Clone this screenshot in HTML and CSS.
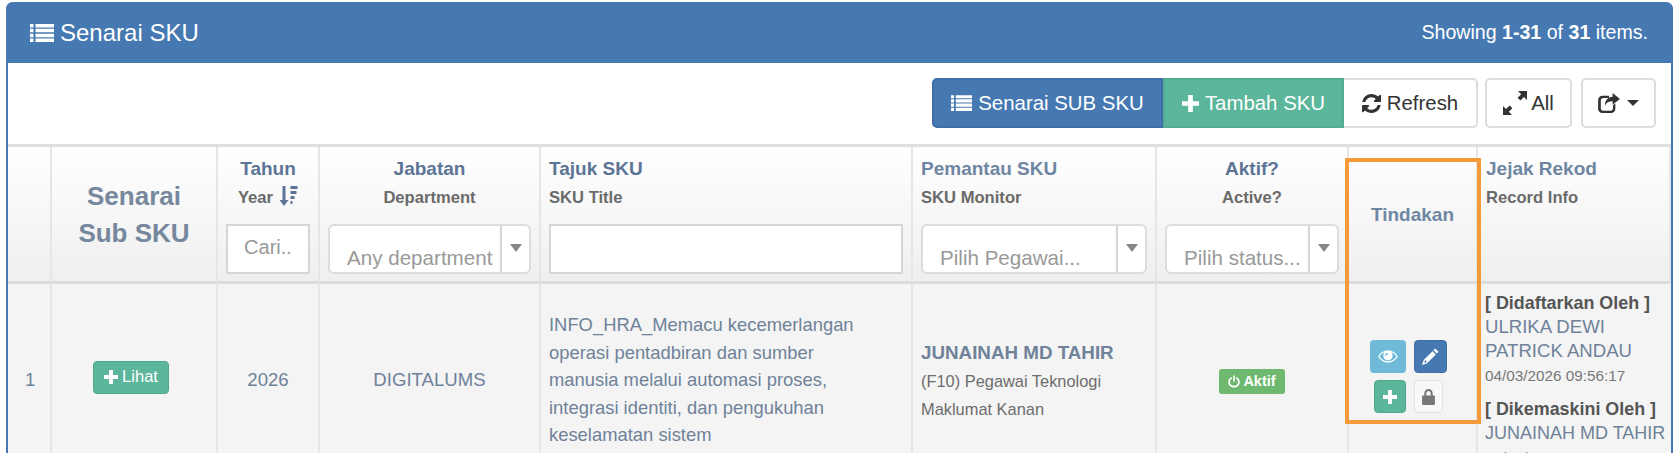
FILE: index.html
```html
<!DOCTYPE html>
<html lang="ms">
<head>
<meta charset="utf-8">
<title>Senarai SKU</title>
<link rel="stylesheet" href="styles.css">
</head>
<body>
<svg class="defs" width="0" height="0">
  <symbol id="i-list" viewBox="0 0 24 18"><path d="M0 0h3.500v3.500H0zM5.500 0H24v3.500H5.500zM0 4.800h3.500v3.500H0zM5.500 4.800H24v3.500H5.500zM0 9.700h3.500v3.500H0zM5.500 9.700H24v3.500H5.500zM0 14.500h3.500V18H0zM5.500 14.500H24V18H5.500z"/></symbol>
  <symbol id="i-plus" viewBox="0 0 16 16"><path d="M5.800 0h4.400v5.800H16v4.400h-5.800V16H5.800v-5.800H0V5.800h5.800z"/></symbol>
  <symbol id="i-refresh" viewBox="0 0 1536 1536"><path d="M1511 928q0 5-1 7-64 268-268 434.500t-478 166.500q-146 0-282.500-55t-243.500-157l-129 129q-19 19-45 19t-45-19-19-45v-448q0-26 19-45t45-19h448q26 0 45 19t19 45-19 45l-137 137q71 66 161 102t187 36q134 0 250-65t186-179q11-17 53-117 8-23 30-23h192q13 0 22.500 9.500t9.500 22.500zM1536 128v448q0 26-19 45t-45 19h-448q-26 0-45-19t-19-45 19-45l138-138q-148-137-349-137-134 0-250 65t-186 179q-11 17-53 117-8 23-30 23h-199q-13 0-22.500-9.500t-9.500-22.500v-7q65-268 270-434.500t480-166.500q146 0 284 55.500t245 156.500l130-129q19-19 45-19t45 19 19 45z"/></symbol>
  <symbol id="i-resize" viewBox="0 0 24 24"><path d="M15 0h9v9l-3-3-3.600 3.600-2.800-2.800L18.200 3.200zM0 15l3 3 3.600-3.600 2.800 2.800L5.800 20.800 9 24H0z"/></symbol>
  <symbol id="i-share" viewBox="0 0 24 22"><path d="M5 3h7v2.600H5.600C4.200 5.600 3 6.800 3 8.200v8.600C3 18.200 4.200 19.400 5.600 19.400h8.200c1.400 0 2.600-1.200 2.600-2.600v-3.300l2.600-2v5.800c0 2.600-2.100 4.700-4.700 4.700H4.700C2.100 22 0 19.900 0 17.300V8C0 5.200 2.200 3 5 3z"/><path d="M16 0l8 6.500-8 6.500V9c-4.500 0-7 1.500-8.500 5 0-6 3-9.500 8.500-10z"/></symbol>
  <symbol id="i-eye" viewBox="0 0 26 16"><path fill-rule="evenodd" d="M13 0c5.500 0 10 3 13 8-3 5-7.500 8-13 8S3 13 0 8c3-5 7.500-8 13-8zM8.800 2.300C5.900 3.300 3.600 5.300 1.900 8c2.500 3.800 6.500 6.300 11.100 6.300S21.600 11.800 24.100 8c-1.700-2.700-4-4.700-6.900-5.700 1.100 1.200 1.800 2.800 1.800 4.700 0 3.400-2.700 6-6 6s-6-2.600-6-6c0-1.900.7-3.500 1.800-4.700z"/><path d="M12.500 3.400c-1.900 0-3.400 1.300-3.400 3 0 .6.500 1 1 1s1-.4 1-1c0-.6.600-1 1.400-1 .5 0 1-.5 1-1s-.5-1-1-1z" fill="#6fbad9"/></symbol>
  <symbol id="i-pencil" viewBox="0 0 20 20"><path fill-rule="evenodd" d="M15.500.6l3.900 3.900-2 2L13.500 2.600zM12.400 3.700l3.900 3.900L6 18l-6 2 2-6zM3.600 14.200l-1 3.200 3.200-1z"/></symbol>
  <symbol id="i-lock" viewBox="0 0 16 20"><path fill-rule="evenodd" d="M8 0c3 0 5.200 2.300 5.200 5.200V8H15c.6 0 1 .4 1 1v10c0 .6-.4 1-1 1H1c-.6 0-1-.4-1-1V9c0-.6.4-1 1-1h1.800V5.200C2.800 2.300 5 0 8 0zm0 2.500c-1.600 0-2.700 1.200-2.700 2.800V8h5.400V5.300c0-1.600-1.100-2.800-2.700-2.800z"/></symbol>
  <symbol id="i-power" viewBox="0 0 16 16"><path d="M6.900 0h2.200v8H6.900z"/><path d="M4.500 2.100l1 1.900C3.700 5 2.500 6.700 2.500 8.600c0 3 2.500 5.200 5.500 5.200s5.500-2.200 5.500-5.200c0-1.900-1.200-3.600-3-4.600l1-1.900c2.500 1.400 4.200 3.800 4.200 6.500 0 4.300-3.500 7.400-7.700 7.400S.3 12.900.3 8.600c0-2.700 1.700-5.100 4.200-6.500z"/></symbol>
  <symbol id="i-sort" viewBox="0 0 18 20"><path d="M3 0h3v14h3l-4.500 6L0 14h3zM11 0h7v3h-7zM11 5h6v3h-6zM11 10h4v3h-4zM11 15h2v3h-2z"/></symbol>
</svg>

<div class="page">
  <section class="panel">
    <header class="panel-heading">
      <h1 class="panel-title"><svg class="ico-title"><use href="#i-list"/></svg>Senarai SKU</h1>
      <div class="summary">Showing <b>1-31</b> of <b>31</b> items.</div>
    </header>

    <div class="toolbar">
      <div class="btn-group">
        <a class="btn btn-blue btn-first"><svg class="ico-btn-list"><use href="#i-list"/></svg>Senarai SUB SKU</a>
        <a class="btn btn-green"><svg class="ico-btn-plus"><use href="#i-plus"/></svg>Tambah SKU</a>
        <a class="btn btn-white btn-last"><svg class="ico-btn-ref"><use href="#i-refresh"/></svg>Refresh</a>
      </div>
      <a class="btn btn-white btn-solo btn-all"><svg class="ico-btn-res"><use href="#i-resize"/></svg>All</a>
      <a class="btn btn-white btn-solo btn-export"><svg class="ico-btn-share"><use href="#i-share"/></svg><span class="caret"></span></a>
    </div>

    <table class="grid">
      <colgroup>
        <col class="c-no"><col class="c-sub"><col class="c-year"><col class="c-dept"><col class="c-title"><col class="c-mon"><col class="c-act"><col class="c-tool"><col class="c-rec">
      </colgroup>
      <thead>
        <tr>
          <th></th>
          <th class="th-big">Senarai<br>Sub SKU</th>
          <th class="th-center">
            <div class="t-main">Tahun</div>
            <div class="t-sub t-year">Year <svg class="ico-sort"><use href="#i-sort"/></svg></div>
            <div class="input input-cari">Cari..</div>
          </th>
          <th class="th-center">
            <div class="t-main">Jabatan</div>
            <div class="t-sub">Department</div>
            <div class="select"><span class="sel-val">Any department</span><span class="sel-arrow"></span></div>
          </th>
          <th>
            <div class="t-main">Tajuk SKU</div>
            <div class="t-sub">SKU Title</div>
            <div class="input"></div>
          </th>
          <th>
            <div class="t-main t-light">Pemantau SKU</div>
            <div class="t-sub">SKU Monitor</div>
            <div class="select"><span class="sel-val">Pilih Pegawai...</span><span class="sel-arrow"></span></div>
          </th>
          <th class="th-center">
            <div class="t-main">Aktif?</div>
            <div class="t-sub">Active?</div>
            <div class="select"><span class="sel-val">Pilih status...</span><span class="sel-arrow"></span></div>
          </th>
          <th class="th-mid">Tindakan</th>
          <th class="th-rec">
            <div class="t-main t-light">Jejak Rekod</div>
            <div class="t-sub">Record Info</div>
          </th>
        </tr>
      </thead>
      <tbody>
        <tr>
          <td class="td-no">1</td>
          <td class="td-center"><a class="btn-lihat"><svg class="ico-lihat"><use href="#i-plus"/></svg>Lihat</a></td>
          <td class="td-center">2026</td>
          <td class="td-center">DIGITALUMS</td>
          <td class="td-title">INFO_HRA_Memacu kecemerlangan operasi pentadbiran dan sumber manusia melalui automasi proses, integrasi identiti, dan pengukuhan keselamatan sistem</td>
          <td class="td-text">
            <div class="mon-name">JUNAINAH MD TAHIR</div>
            <div class="mon-role">(F10) Pegawai Teknologi Maklumat Kanan</div>
          </td>
          <td class="td-center"><span class="label-on"><svg class="ico-power"><use href="#i-power"/></svg>Aktif</span></td>
          <td class="td-tools">
            <div class="tool-row">
              <a class="tool tool-eye"><svg class="ico-eye"><use href="#i-eye"/></svg></a>
              <a class="tool tool-edit"><svg class="ico-pen"><use href="#i-pencil"/></svg></a>
            </div>
            <div class="tool-row">
              <a class="tool tool-add"><svg class="ico-add"><use href="#i-plus"/></svg></a>
              <a class="tool tool-lock"><svg class="ico-lock"><use href="#i-lock"/></svg></a>
            </div>
          </td>
          <td class="td-rec">
            <div class="rec-h">[ Didaftarkan Oleh ]</div>
            <div class="rec-n">ULRIKA DEWI PATRICK ANDAU</div>
            <div class="rec-d">04/03/2026 09:56:17</div>
            <div class="rec-h rec-gap">[ Dikemaskini Oleh ]</div>
            <div class="rec-n rec-one">JUNAINAH MD TAHIR</div>
            <div class="rec-d">05/03/2026 08:30:22</div>
          </td>
        </tr>
      </tbody>
    </table>
    <div class="highlight"></div>
  </section>
</div>
</body>
</html>
```
FILE: styles.css
```css
html, body { margin: 0; height: 453px; overflow: hidden; background: #fff; }
body { font-family: "Liberation Sans", Arial, sans-serif; color: #6f8299; }
.defs { position: absolute; }
svg { fill: currentColor; display: inline-block; flex: none; }

.page { padding: 2px 7px 0 6px; }
.panel { position: relative; border: solid #4679b2; border-width: 0 2px; border-radius: 7px 7px 0 0; background: #fff; }

.panel-heading { height: 61px; margin: 0 -2px; padding: 0 25px 0 24px; background: #4679b2; color: #fff; border-radius: 7px 7px 0 0; display: flex; justify-content: space-between; align-items: center; }
.panel-title { margin: 0; font-size: 24px; font-weight: 400; display: flex; align-items: center; }
.ico-title { width: 24px; height: 18px; margin-right: 6px; }
.summary { font-size: 19.6px; }

.toolbar { height: 81px; box-sizing: border-box; padding: 15px 15px 0 0; display: flex; justify-content: flex-end; gap: 9px; }
.btn-group { display: flex; margin-right: -2px; }
.btn { height: 50px; box-sizing: border-box; display: flex; align-items: center; justify-content: center; font-size: 20.4px; border: 2px solid transparent; }
.btn-first { border-radius: 5px 0 0 5px; }
.btn-last { border-radius: 0 5px 5px 0; }
.btn-solo { border-radius: 5px; }
.btn-blue { width: 231px; background: #4679b2; border-color: #3f6fa6; color: #fff; }
.btn-green { width: 181px; background: #5cb69b; border-color: #55ac92; color: #fff; }
.btn-white { background: #fff; border-color: #dcdcdc; color: #333; }
.btn-last { width: 134px; border-left: 0; }
.btn-all { width: 87px; }
.btn-export { width: 75px; }
.ico-btn-list { width: 21px; height: 16px; margin-right: 6px; }
.ico-btn-plus { width: 17px; height: 17px; margin-right: 6px; }
.ico-btn-ref { width: 19px; height: 19px; margin-right: 6px; }
.ico-btn-res { width: 24px; height: 24px; margin-right: 4px; }
.ico-btn-share { width: 22px; height: 20px; margin-right: 7px; }
.caret { width: 0; height: 0; border-style: solid; border-width: 6px 6px 0; border-color: #333 transparent transparent; }

.grid { width: 1663px; table-layout: fixed; border-collapse: separate; border-spacing: 0; border-top: 3px solid #e0e0e0; }
.c-no { width: 44px; } .c-sub { width: 166px; } .c-year { width: 102px; } .c-dept { width: 221px; }
.c-title { width: 372px; } .c-mon { width: 244px; } .c-act { width: 192px; } .c-tool { width: 129px; } .c-rec { width: 193px; }

.grid th { height: 137px; box-sizing: border-box; padding: 9px 8px 0; vertical-align: top; text-align: left; background: linear-gradient(#fff, #efefef); border-right: 2px solid #e6e6e6; border-bottom: 3px solid #dcdcdc; font-weight: 700; }
.grid th.th-center { text-align: center; }
.grid th.th-big { padding: 2px 0 0; vertical-align: middle; text-align: center; font-size: 26px; line-height: 37px; color: #76889d; }
.grid th.th-mid { padding: 2px 0 0; vertical-align: middle; text-align: center; font-size: 19px; color: #6f87a3; }
.t-main { font-size: 19px; line-height: 26px; color: #5c7495; }
.t-light { color: #6f86a2; }
.t-sub { margin-top: 4px; font-size: 16.6px; line-height: 24px; color: #6a6a6a; }
.t-year { display: flex; align-items: center; justify-content: center; gap: 6px; }
.ico-sort { width: 19px; height: 20px; color: #5c7495; margin-top: -4px; }

.input { height: 50px; box-sizing: border-box; margin-top: 14px; background: #fff; border: 2px solid #d6d6d6; font-size: 20px; font-weight: 400; color: #999; display: flex; align-items: center; justify-content: center; padding-bottom: 4px; }
.select { height: 50px; box-sizing: border-box; margin-top: 14px; background: #fff; border: 2px solid #dcdcdc; border-radius: 6px; display: flex; font-size: 20.6px; font-weight: 400; color: #999; text-align: left; }
.sel-val { flex: 1; min-width: 0; white-space: nowrap; overflow: hidden; padding: 17px 0 0 17px; line-height: 30px; }
.sel-arrow { width: 27px; flex: none; border-left: 2px solid #d6d6d6; position: relative; }
.sel-arrow::after { content: ""; position: absolute; left: 8px; top: 18px; border-style: solid; border-width: 8px 6px 0; border-color: #888 transparent transparent; }

.grid td { height: 192px; box-sizing: border-box; padding: 0 8px; background: #f4f4f4; border-right: 2px solid #e6e6e6; font-size: 18.6px; line-height: 27.4px; vertical-align: middle; }
.grid td.td-center { text-align: center; }
.grid td.td-no { padding-left: 17px; }
.grid td.td-title { font-size: 18.4px; padding-right: 50px; }
.btn-lihat { display: inline-flex; align-items: center; height: 33px; width: 76px; box-sizing: border-box; justify-content: center; background: #5cb69b; border: 1px solid #4fa88d; border-radius: 4px; color: #fff; font-size: 16.5px; margin-bottom: 6px; margin-right: 6px; }
.ico-lihat { width: 14px; height: 14px; margin-right: 4px; }
.mon-name { font-size: 18.8px; font-weight: 700; line-height: 29px; }
.mon-role { font-size: 16.4px; line-height: 28px; color: #6c6c6c; }
.label-on { display: inline-flex; align-items: center; height: 25px; width: 66px; box-sizing: border-box; justify-content: center; background: #6fb86f; border-radius: 3px; color: #fff; font-size: 14.5px; font-weight: 700; line-height: 1; margin-top: 4px; }
.ico-power { width: 12px; height: 13px; margin-right: 3px; }

.grid td.td-tools { padding: 56px 0 0; vertical-align: top; }
.tool-row { display: flex; justify-content: flex-end; gap: 8px; margin-right: 29px; margin-bottom: 7px; }
.tool { height: 33px; box-sizing: border-box; display: flex; align-items: center; justify-content: center; border-radius: 4px; color: #fff; }
.tool-eye { width: 36px; background: #6fbad9; }
.tool-edit { width: 33px; background: #4679b2; border: 1px solid #3f6fa6; }
.tool-add { width: 32px; background: #5cb69b; border: 1px solid #4fa88d; margin-right: 0; }
.tool-lock { width: 29px; margin-right: 4px; background: #f8f8f8; border: 1px solid #e2e2e2; color: #777; }
.ico-eye { width: 20px; height: 13px; }
.ico-pen { width: 17px; height: 17px; }
.ico-add { width: 14px; height: 14px; }
.ico-lock { width: 13px; height: 16px; }

.grid td.td-rec { padding: 7px 0 0 7px; vertical-align: top; border-right: 0; line-height: 24px; }
.rec-h { font-size: 17.9px; font-weight: 700; color: #555; }
.rec-one { white-space: nowrap; font-size: 18px; }
.rec-gap { margin-top: 9px; }
.rec-d { font-size: 15.3px; line-height: 25px; color: #777; }

.highlight { position: absolute; left: 1337px; top: 156px; width: 136px; height: 266px; box-sizing: border-box; border: 4px solid #f59a3a; pointer-events: none; }
```
